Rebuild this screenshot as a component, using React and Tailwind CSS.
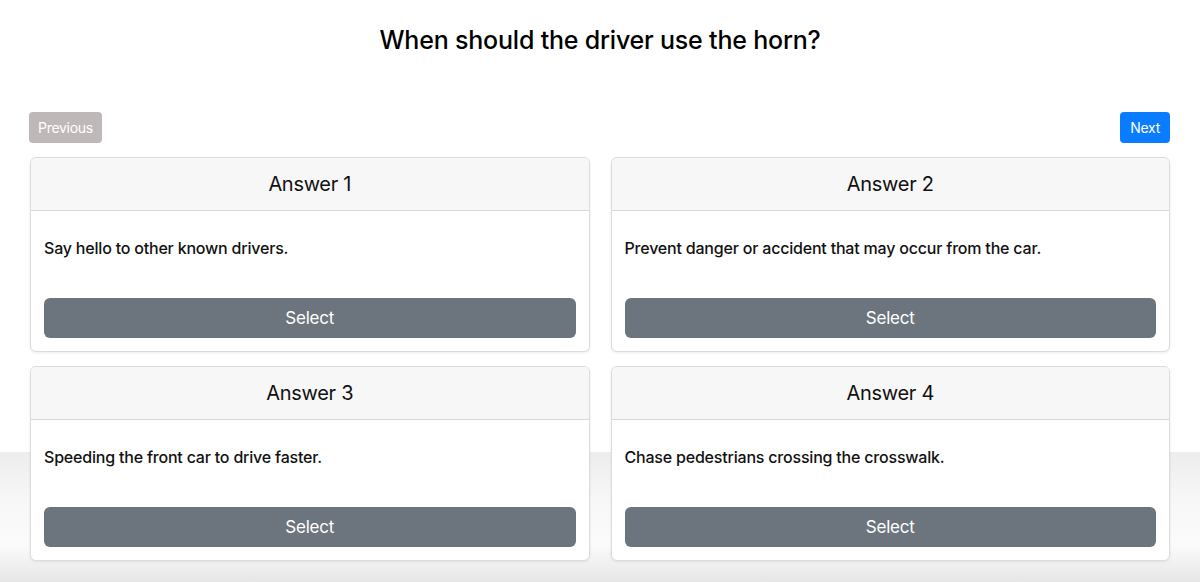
import React from 'react';

const ANSWERS = [
  { id: 1, text: 'Say hello to other known drivers.' },
  { id: 2, text: 'Prevent danger or accident that may occur from the car.' },
  { id: 3, text: 'Speeding the front car to drive faster.' },
  { id: 4, text: 'Chase pedestrians crossing the crosswalk.' },
];

function AnswerCard({ id, text }) {
  return (
    <div className="bg-white border border-[#dcdcdc] rounded-[6px] shadow-[0_1px_3px_rgba(0,0,0,0.08)] overflow-hidden">
      <div className="h-[53px] flex items-center justify-center bg-[#f7f7f7] border-b border-[#d9d9d9] text-[20px] tracking-[-0.3px] text-[#111]">
        Answer {id}
      </div>
      <div className="px-[13px] pt-[25px] pb-[13px]">
        <p className="text-[16px] leading-6 font-medium tracking-[-0.2px] text-[#111] mb-[38px]">{text}</p>
        <button className="w-full h-[40px] rounded-[6px] bg-[#6c757d] text-white text-[17px] tracking-[-0.2px] pt-[2px]">
          Select
        </button>
      </div>
    </div>
  );
}

export default function App() {
  return (
    <div
      className="min-h-[582px] font-['Inter','Liberation_Sans',sans-serif] bg-[linear-gradient(to_bottom,#ffffff_0px,#ffffff_452px,#ededed_452px,#f7f7f7_500px,#fbfbfb_545px,#e6e6e6_582px)]"
    >
      <h1 className="pt-[22px] text-center text-[25px] leading-9 font-medium text-black tracking-[-0.2px]">
        When should the driver use the horn?
      </h1>

      <div className="px-[30px] mt-[54px]">
        <div className="flex justify-between items-center">
          <button className="-ml-[1px] h-[31px] px-[9px] rounded-[4px] bg-[#bfb8b8] text-white text-[14px] tracking-[-0.3px]">
            Previous
          </button>
          <button className="h-[31px] px-[10px] rounded-[4px] bg-[#0a7cff] text-white text-[14px] tracking-[-0.3px]">
            Next
          </button>
        </div>

        <div className="grid grid-cols-2 gap-x-[21px] gap-y-[14px] mt-[14px]">
          {ANSWERS.map(a => (
            <AnswerCard key={a.id} {...a} />
          ))}
        </div>
      </div>
    </div>
  );
}
